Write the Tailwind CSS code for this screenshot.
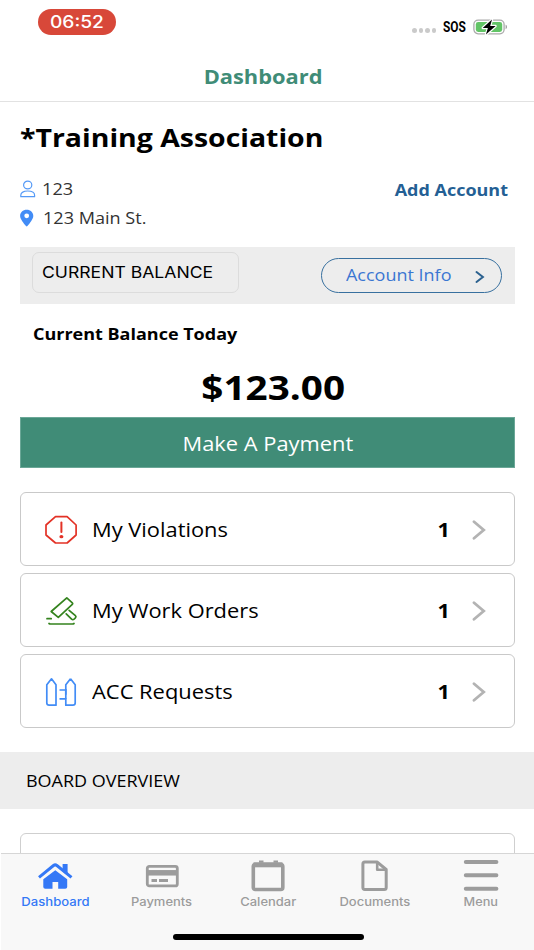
<!DOCTYPE html>
<html lang="en">
<head>
<meta charset="utf-8">
<title>Dashboard</title>
<script src="https://cdn.jsdelivr.net/npm/@tailwindcss/browser@4"></script>
</head>
<body class="bg-white">
<div class="w-[534px] h-[950px] overflow-hidden flex flex-col bg-white text-black font-['Open_Sans',sans-serif] whitespace-nowrap">
  <header class="shrink-0 h-[102px] border-b border-[#e2e2e2] flex flex-col">
    <div class="h-[53px] pl-[38px] pr-[26px] flex justify-between items-start">
      <div class="mt-[9px] w-[78px] h-[26px] rounded-full bg-[#d84839] flex items-center justify-center text-white font-medium text-[17px] leading-none font-['Inter',sans-serif]"><span class="scale-x-[1.13] pt-px">06:52</span></div>
      <div class="mt-[16px] h-[21px] flex items-center">
        <div class="flex gap-[2px] mt-[8px] mr-[7px]">
          <i class="size-[4.5px] rounded-full bg-[#cacaca]"></i><i class="size-[4.5px] rounded-full bg-[#cacaca]"></i><i class="size-[4.5px] rounded-full bg-[#cacaca]"></i><i class="size-[4.5px] rounded-full bg-[#cacaca]"></i>
        </div>
        <span class="font-bold text-[14px] leading-none font-['Roboto',sans-serif] w-[23px] mr-[7px]"><span class="inline-block origin-left scale-x-[0.85]">SOS</span></span>
        <svg class="w-[35px] h-[18px]" viewBox="0 0 35 18">
          <rect x="0.9" y="2.2" width="30.2" height="13.6" rx="4.2" fill="#fff" stroke="#aaa" stroke-width="1.3"/>
          <rect x="2.8" y="4" width="26.4" height="10" rx="2.4" fill="#62c466"/>
          <path d="M32.6 6.8c1.8.6 1.8 3.8 0 4.4z" fill="#999"/>
          <path d="M19 1.6 9.7 10h5.2l-2 6.6L22.6 8h-5.4z" fill="#000" stroke="#fff" stroke-width="2.4" paint-order="stroke" stroke-linejoin="round"/>
        </svg>
      </div>
    </div>
    <h1 class="h-[48px] text-center font-bold text-[19.5px] leading-[48px] text-[#408c77]"><span class="inline-block relative left-[-4px] scale-x-[1.12]">Dashboard</span></h1>
  </header>

  <main class="shrink-0 h-[751px] overflow-hidden">
    <div class="pl-[20px] pr-[19px]">
      <h2 class="h-[73px] pt-[15px] font-bold text-[25px] leading-[40px]"><span class="inline-block origin-left scale-x-[1.137]">*Training Association</span></h2>
      <div class="h-[72px] flex justify-between text-[16.5px]">
        <div class="text-[#333]">
          <div class="h-[29px] flex items-center">
            <svg class="w-[16px] h-[18px] mr-[6px] mb-[2px]" viewBox="0 0 16 18" fill="none" stroke="#5499f6" stroke-width="1.2"><ellipse cx="7.7" cy="5" rx="4.1" ry="3.8"/><path d="M.8 16.7v-1.5c0-2.6 2.7-4.2 6.9-4.2s6.9 1.6 6.9 4.2v1.5z" stroke-linejoin="round"/></svg>
            <span class="inline-block origin-left scale-x-[1.1]">123</span>
          </div>
          <div class="h-[28px] flex items-center">
            <svg class="w-[14px] h-[18px] mr-[9px] mb-px" viewBox="0 0 14 18"><path fill="#428cf6" fill-rule="evenodd" d="M6.7.8C2.9.8.1 3.4.1 6.9c0 3 3.8 7.5 5.9 10.2.4.5 1 .5 1.4 0 2.1-2.7 5.9-7.2 5.9-10.2C13.3 3.4 10.500.8 6.700.8zM6.700 9.200a2.400 2.400 0 1 1 0-4.800 2.400 2.400 0 0 1 0 4.800z"/></svg>
            <span class="inline-block origin-left scale-x-[1.095]">123 Main St.</span>
          </div>
        </div>
        <a class="h-[29px] leading-[29px] pr-[7px] font-bold text-[#245f94]"><span class="inline-block origin-right scale-x-[1.09]">Add Account</span></a>
      </div>
      <div class="h-[57px] bg-[#ededed] pl-[12px] pr-[13px] flex justify-between">
        <div class="mt-[5px] w-[207px] h-[41px] rounded-[7px] border border-[#dcdcdc] pl-[9px] leading-[39px] text-[16.3px] font-['Inter',sans-serif]"><span class="inline-block origin-left scale-x-[1.08]">CURRENT BALANCE</span></div>
        <a class="mt-[11px] w-[181px] h-[35px] rounded-full border-[1.5px] border-[#38709f] pl-[24px] pr-[16px] flex items-center justify-between text-[16.5px] text-[#3b76d2]">
          <span class="inline-block origin-left scale-x-[1.09]">Account Info</span>
          <svg class="w-[10px] h-[14px] mt-[3px]" viewBox="0 0 10 14" fill="none" stroke="#2b618f" stroke-width="2"><path d="m1.500 2 6.400 5-6.400 5" stroke-linecap="round"/></svg>
        </a>
      </div>
      <h3 class="h-[59px] pl-[13px] leading-[59px] font-bold text-[16.5px]"><span class="inline-block origin-left scale-x-[1.09]">Current Balance Today</span></h3>
      <div class="h-[54px] text-center leading-[48px] font-bold text-[34px]"><span class="inline-block relative left-[6px] scale-x-[1.137]">$123.00</span></div>
      <button class="block w-full h-[51px] bg-[#408c77] border border-[#6ba797] text-white text-[19.7px] leading-[51px]"><span class="inline-block scale-x-[1.11]">Make A Payment</span></button>

      <div class="pt-[24px] flex flex-col gap-[7px] text-[19.7px]">
        <div class="h-[74px] border-[1.5px] border-[#c9c9c9] rounded-[6px] flex items-center pt-px pl-[24px] pr-[28px]">
          <svg class="w-[34px] h-[30px] mr-[13px]" viewBox="0.500 0 34 30" fill="none" stroke="#e33226" stroke-width="1.700" stroke-linejoin="round"><path d="M11 1.700h11.600L31.600 10v10L22.600 28H11L1.500 20V10z"/><path d="M16.900 7.500v9.500" stroke-width="2" stroke-linecap="round"/><ellipse cx="16.900" cy="21.700" rx="2" ry="1.600" fill="#e33226" stroke="none"/></svg>
          <span class="inline-block origin-left scale-x-[1.110]">My Violations</span>
          <b class="ml-auto mr-[23px] scale-x-[1.1]">1</b>
          <svg class="w-[14px] h-[20px]" viewBox="0 0 14 20" fill="none" stroke="#b3b3b3" stroke-width="2.800"><path d="m2 1.700 9.700 8.300-9.700 8.300" stroke-linecap="round"/></svg>
        </div>
        <div class="h-[74px] border-[1.5px] border-[#c9c9c9] rounded-[6px] flex items-center pt-px pl-[24px] pr-[28px]">
          <svg class="w-[34px] h-[30px] mr-[13px]" viewBox="0.500 0 34 30" fill="none" stroke="#34831e" stroke-width="1.700" stroke-linejoin="round" stroke-linecap="round"><path d="M22.300 1.900 27.800 6.900Q28.600 7.600 27.800 8.300L13.800 21.300 6.700 15.500Z"/><path d="m21.700 17.900 5.400 5.200c.8.700 1.700.7 2.500 0l1.300-1.200c.7-.7.7-1.500 0-2.200l-6.300-5.400M2.500 22.700h4.200M4.500 27.500q.6.500 1.500.5h22q.9 0 1.500-.5"/></svg>
          <span class="inline-block origin-left scale-x-[1.110]">My Work Orders</span>
          <b class="ml-auto mr-[23px] scale-x-[1.1]">1</b>
          <svg class="w-[14px] h-[20px]" viewBox="0 0 14 20" fill="none" stroke="#b3b3b3" stroke-width="2.800"><path d="m2 1.700 9.700 8.300-9.700 8.300" stroke-linecap="round"/></svg>
        </div>
        <div class="h-[74px] border-[1.5px] border-[#c9c9c9] rounded-[6px] flex items-center pt-px pl-[24px] pr-[28px]">
          <svg class="w-[34px] h-[30px] mr-[13px]" viewBox="0.500 0 34 30" fill="none" stroke="#428cf6" stroke-width="1.700" stroke-linejoin="round"><path d="M7 1.800 11.500 7.800V28.200H4.600Q2.300 28.200 2.300 26V7.800ZM26 1.800 30.700 7.800V26Q30.700 28.200 28.400 28.200H21.300V21.800H15M21.300 17.800V7.800L26 1.800M15 13h6.300"/><path d="M21.300 12v10"/></svg>
          <span class="inline-block origin-left scale-x-[1.112]">ACC Requests</span>
          <b class="ml-auto mr-[23px] scale-x-[1.1]">1</b>
          <svg class="w-[14px] h-[20px]" viewBox="0 0 14 20" fill="none" stroke="#b3b3b3" stroke-width="2.800"><path d="m2 1.700 9.700 8.300-9.700 8.300" stroke-linecap="round"/></svg>
        </div>
      </div>
    </div>
    <h3 class="mt-[24px] h-[57px] bg-[#ededed] pl-[26px] leading-[57px] text-[16.5px]"><span class="inline-block origin-left scale-x-[1.09]">BOARD OVERVIEW</span></h3>
    <div class="mt-[24px] ml-[20px] mr-[19px] h-[74px] border-[1.5px] border-[#cfcfcf] rounded-[6px]"></div>
  </main>

  <nav class="shrink-0 ml-[1px] h-[97px] bg-[#f8f8f8] border-t border-[#d6d6d6] flex flex-col items-center text-[#9c9c9c] text-[11.700px] font-medium leading-none font-['Inter',sans-serif]">
    <div class="w-[533px] h-[80px] pl-px flex">
      <a class="w-[106px] flex flex-col items-center pt-[5px] text-[#3478f6]">
        <svg class="w-[36px] h-[34px] mb-[4px]" viewBox="0 0 36 34" fill="currentColor"><path d="M18.300 11.200 30.200 20.300V28Q30.200 29.800 28.200 29.800H21.200V23H15.500V29.800H8.300Q6.300 29.800 6.300 28V20.300Z"/><path d="M2 18.300 16.500 6.500Q18.200 5.300 19.900 6.500L34.500 18.300" fill="none" stroke="currentColor" stroke-width="3"/><path d="M25.600 5h5v11.500l-5-4z"/></svg>
        <span class="scale-x-[1.120]">Dashboard</span>
      </a>
      <a class="w-[107px] flex flex-col items-center pt-[5px]">
        <svg class="w-[36px] h-[34px] mb-[4px]" viewBox="0 1 36 34" fill="none" stroke="currentColor"><rect x="3.300" y="8.300" width="30" height="19.600" rx="2" stroke-width="2.800"/><path d="M3 14.800h30.500" stroke-width="5.500"/><path d="M7.500 22.500h5.500M15 22.500h9" stroke-width="2.800"/></svg>
        <span class="scale-x-[1.110]">Payments</span>
      </a>
      <a class="w-[106px] flex flex-col items-center pt-[5px]">
        <svg class="w-[36px] h-[34px] mb-[4px]" viewBox="0 0 36 34" fill="none" stroke="currentColor"><rect x="3.300" y="5.500" width="29.500" height="25" rx="2" stroke-width="3.600"/><path d="M3.500 5.800h29" stroke-width="5"/><path d="M9 2.700h4.500M23.500 2.700h4.500" stroke-width="2.200"/></svg>
        <span class="scale-x-[1.110]">Calendar</span>
      </a>
      <a class="w-[107px] flex flex-col items-center pt-[5px]">
        <svg class="w-[36px] h-[34px] mb-[4px]" viewBox="0.500 0.500 36 34" fill="none" stroke="currentColor" stroke-linejoin="round" stroke-width="3"><path d="M8.300 3.400H20.500L29.700 11V29Q29.700 31 27.700 31H8.300Q6.400 31 6.400 29V5.400Q6.400 3.400 8.300 3.400Z"/><path d="M20.700 4v7.200h8.500" stroke-width="2.600"/></svg>
        <span class="scale-x-[1.110]">Documents</span>
      </a>
      <a class="w-[106px] flex flex-col items-center pt-[5px]">
        <svg class="w-[36px] h-[34px] mb-[4px]" viewBox="0 0.500 36 34" stroke="currentColor" stroke-linecap="round" stroke-width="4"><path d="M2.800 3.400h30.600M2.800 16.700h30.600M2.800 30.200h30.600"/></svg>
        <span class="scale-x-[1.090]">Menu</span>
      </a>
    </div>
    <div class="w-[191px] h-[6px] ml-[2px] rounded-full bg-black"></div>
  </nav>
</div>
</body>
</html>
